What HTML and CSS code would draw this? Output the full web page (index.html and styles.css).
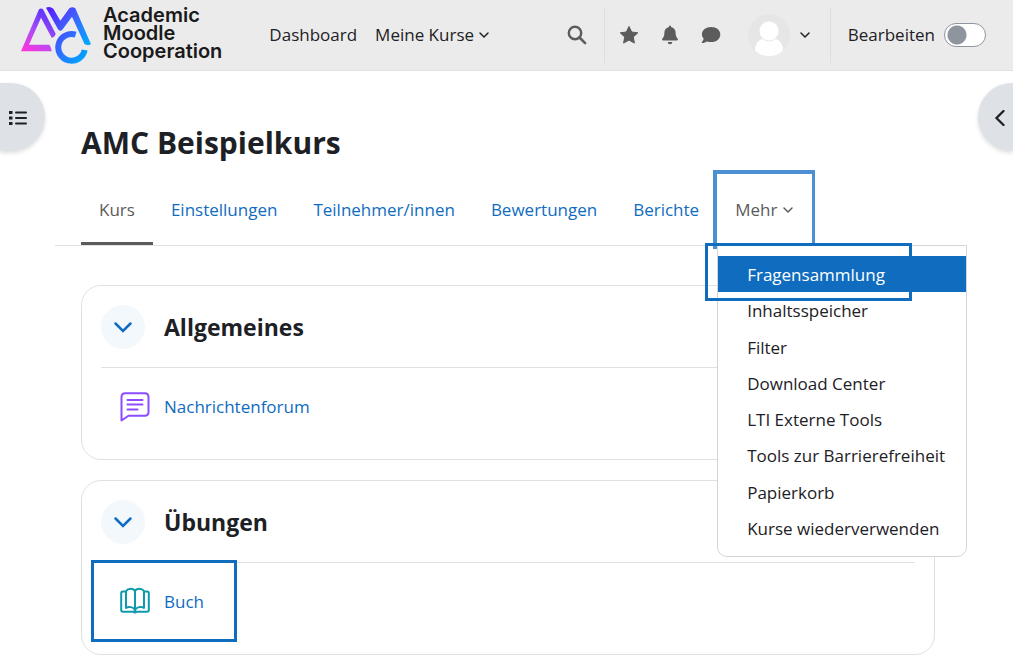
FILE: index.html
```html
<!DOCTYPE html>
<html lang="de">
<head>
<meta charset="utf-8">
<meta name="viewport" content="width=device-width, initial-scale=1">
<title>AMC Beispielkurs</title>
<link rel="stylesheet" href="styles.css">
</head>
<body>
<header class="navbar">
  <a class="brand" href="#">
    <svg class="brand-mark" viewBox="18 15 213 174" aria-hidden="true">
      <defs>
        <linearGradient id="gradA" gradientUnits="userSpaceOnUse" x1="30" y1="150" x2="105" y2="40">
          <stop offset="0" stop-color="#ff35dc"/><stop offset=".45" stop-color="#b14cf5"/><stop offset="1" stop-color="#5b35ff"/>
        </linearGradient>
        <linearGradient id="gradM" gradientUnits="userSpaceOnUse" x1="98" y1="20" x2="222" y2="125">
          <stop offset="0" stop-color="#5a18ff"/><stop offset=".5" stop-color="#3f63ff"/><stop offset="1" stop-color="#00a8ff"/>
        </linearGradient>
        <linearGradient id="gradC" gradientUnits="userSpaceOnUse" x1="125" y1="95" x2="215" y2="170">
          <stop offset="0" stop-color="#4a4dff"/><stop offset="1" stop-color="#00a6ff"/>
        </linearGradient>
      </defs>
      <path d="M72 25Q78 20 84 25L122 98Q120 108 110 110L78 50L42 131H103Q109 139 110 151H18Z" fill="url(#gradA)"/>
      <path d="M93 20Q105 15 115 23L136 59L163 22Q172 16 181 22L228 130Q220 135 209 130L171 47L142 86Q136 92 130 86Z" fill="url(#gradM)"/>
      <path d="M182 101A40 40 0 1 0 209 147" fill="none" stroke="url(#gradC)" stroke-width="18"/>
    </svg>
    <span class="brand-name">Academic<br>Moodle<br>Cooperation</span>
  </a>
  <nav class="main-nav" aria-label="Hauptnavigation">
    <a href="#">Dashboard</a>
    <a href="#">Meine Kurse <svg class="caret" viewBox="0 0 12 12" aria-hidden="true"><path d="M2 4l4 4 4-4"/></svg></a>
  </nav>
  <div class="tools">
    <button class="tool" type="button" aria-label="Suche"><svg viewBox="0 0 20 20" aria-hidden="true"><circle cx="8" cy="8" r="6.2" fill="none" stroke="currentColor" stroke-width="2.4"/><path d="M12.500 12.500l5.600 5.600" stroke="currentColor" stroke-width="2.600" stroke-linecap="round"/></svg></button>
    <div class="tool-set">
      <button class="tool" type="button" aria-label="Favoriten"><svg viewBox="0 0 20 20" aria-hidden="true"><path fill="currentColor" stroke="currentColor" stroke-linejoin="round" d="M10 1.400l2.700 5.600 6.100.800-4.500 4.200 1.100 6.100L10 15.100l-5.400 3 1.100-6.100L1.200 7.800l6.100-.800z"/></svg></button>
      <button class="tool" type="button" aria-label="Mitteilungen"><svg viewBox="0 0 20 20" aria-hidden="true"><path fill="currentColor" d="M9 1.500a1 1 0 0 1 2 0v.6c2.800.5 4.600 2.700 4.600 5.400 0 3.300.8 4.700 2 6 .7.800.2 2-.8 2H3.200c-1 0-1.500-1.200-.8-2 1.200-1.300 2-2.700 2-6 0-2.700 1.800-4.900 4.600-5.400zM7.700 17h4.600a2.300 2.300 0 0 1-4.600 0z"/></svg></button>
      <button class="tool" type="button" aria-label="Nachrichten"><svg viewBox="0 0 20 20" aria-hidden="true"><path fill="currentColor" d="M10.200 2C4.900 2 .9 5.200.9 9.300c0 1.700.7 3.200 1.800 4.500-.3 1.300-1 2.400-1.800 3.200-.4.400-.1.900.4.900 1.800 0 3.400-.6 4.700-1.500 1.300.5 2.700.7 4.200.7 5.200 0 9.100-3.400 9.100-7.700S15.400 2 10.200 2z"/></svg></button>
      <button class="user" type="button" aria-label="Nutzermenü">
        <svg class="avatar" viewBox="0 0 42 42" aria-hidden="true"><circle cx="21" cy="21" r="21" fill="#e6e6e6"/><path fill="#fff" d="M7 36c0-8 5-12 14-12s14 4 14 12c-3 4-8 6-14 6S10 40 7 36z"/><circle cx="21" cy="17" r="10" fill="#fff" stroke="#e8e8e8"/></svg>
        <svg class="caret" viewBox="0 0 12 12" aria-hidden="true"><path d="M2 4l4 4 4-4"/></svg>
      </button>
    </div>
    <label class="edit-mode">Bearbeiten <input class="switch" type="checkbox" role="switch"></label>
  </div>
</header>

<button class="drawer drawer-left" type="button" aria-label="Kursindex öffnen"><svg viewBox="0 0 18 16" aria-hidden="true"><path d="M7 2.500h10M7 8h10M7 13.500h10" stroke="currentColor" stroke-width="2" stroke-linecap="round"/><path d="M0 1h3.500v3H0zM0 6.500h3.500v3H0zM0 12h3.500v3H0z" fill="currentColor"/></svg></button>
<button class="drawer drawer-right" type="button" aria-label="Blockleiste öffnen"><svg viewBox="0 0 18 16" aria-hidden="true"><path d="M12.500 1L5.500 8l7 7" fill="none" stroke="currentColor" stroke-width="2.300" stroke-linecap="round"/></svg></button>

<main class="page">
  <h1>AMC Beispielkurs</h1>
  <nav class="tabs" aria-label="Kursnavigation">
    <a class="tab active" href="#">Kurs</a>
    <a class="tab" href="#">Einstellungen</a>
    <a class="tab" href="#">Teilnehmer/innen</a>
    <a class="tab" href="#">Bewertungen</a>
    <a class="tab" href="#">Berichte</a>
    <div class="more">
      <button class="tab more-button" type="button" aria-expanded="true">Mehr <svg class="caret" viewBox="0 0 12 12" aria-hidden="true"><path d="M2 4l4 4 4-4"/></svg></button>
      <div class="menu">
        <a class="selected" href="#">Fragensammlung</a>
        <a href="#">Inhaltsspeicher</a>
        <a href="#">Filter</a>
        <a href="#">Download Center</a>
        <a href="#">LTI Externe Tools</a>
        <a href="#">Tools zur Barrierefreiheit</a>
        <a href="#">Papierkorb</a>
        <a href="#">Kurse wiederverwenden</a>
      </div>
    </div>
  </nav>

  <div class="sections">
    <section class="card">
      <div class="card-head">
        <button class="toggle" type="button" aria-label="Allgemeines einklappen"><svg viewBox="0 0 20 20" aria-hidden="true"><path d="M2.500 6.500L10 14l7.500-7.500"/></svg></button>
        <h2>Allgemeines</h2>
      </div>
      <div class="activity">
        <svg class="forum" viewBox="0 0 30 30" aria-hidden="true"><path d="M1.500 28.500V5q0-3.700 3.700-3.700h19.600q3.700 0 3.700 3.700v15q0 3.700-3.700 3.700H8.500zM7.500 8h15M7.500 12.500h15M7.500 17.500h10"/></svg>
        <a href="#">Nachrichtenforum</a>
      </div>
    </section>
    <section class="card">
      <div class="card-head">
        <button class="toggle" type="button" aria-label="Übungen einklappen"><svg viewBox="0 0 20 20" aria-hidden="true"><path d="M2.500 6.500L10 14l7.500-7.500"/></svg></button>
        <h2>Übungen</h2>
      </div>
      <div class="activity marked">
        <svg class="book" viewBox="0 0 30 30" aria-hidden="true"><path d="M15 4v20M15 4c-1.500-3-7-3-9 0v17c2-1.500 7.500-1.500 9 2 1.500-3.500 7-3.500 9-2V4c-2-3-7.500-3-9 0M6 4.500H3Q1.200 4.500 1.200 6v17q0 1.800 1.800 1.800h10.500q1.500 1.500 3 0H27q1.800 0 1.800-1.800V6q0-1.500-1.800-1.500h-3"/></svg>
        <a href="#">Buch</a>
      </div>
    </section>
  </div>
</main>
</body>
</html>
```
FILE: styles.css
```css
*, *::before, *::after { box-sizing: border-box; }
body {
  margin: 0;
  background: #fff;
  color: #1d2125;
  font: 17px/24px "Open Sans", "Noto Sans", sans-serif;
}
a { color: #0f6cbf; text-decoration: none; }
button { padding: 0; border: 0; background: none; color: inherit; font: inherit; cursor: pointer; }
svg { display: block; flex: none; }
h1, h2 { margin: 0; font-weight: 700; }

.caret { display: inline-block; width: 12px; height: 12px; }
.caret path { fill: none; stroke: currentColor; stroke-width: 1.5; stroke-linecap: round; }

.navbar {
  display: flex;
  align-items: center;
  height: 71px;
  padding: 0 27px 0 21px;
  background: #ebebeb;
  border-bottom: 1px solid #dee2e6;
}
.brand { display: flex; align-items: center; gap: 11px; color: #1a1a1a; }
.brand-mark { width: 71px; height: 58px; }
.brand-name { margin-bottom: 4px; font: 600 20px/18px Inter, sans-serif; }
.main-nav { display: flex; gap: 18px; margin-left: 47px; white-space: nowrap; }
.main-nav a { color: #1d2125; }

.tools { display: flex; align-items: center; height: 56px; margin-left: auto; }
.tool { display: grid; place-items: center; width: 41px; height: 41px; color: #5c5c5c; }
.tool svg { width: 20px; height: 20px; }
.tool-set {
  display: flex;
  align-items: center;
  align-self: stretch;
  margin-left: 6px;
  padding: 0 19px 0 4px;
  border: solid #dcdee0;
  border-width: 0 1px;
}
.user { display: flex; align-items: center; gap: 9px; margin-left: 16px; }
.avatar { width: 42px; height: 42px; }
.edit-mode { display: flex; align-items: center; gap: 9px; margin-left: 17px; }
.switch {
  appearance: none;
  width: 42px;
  height: 24px;
  margin: 0;
  border: 1px solid #8f959e;
  border-radius: 12px;
  background: radial-gradient(circle at 12px 11px, #8f959e 9px, #fff 10px);
}

.drawer {
  position: fixed;
  top: 83px;
  display: flex;
  align-items: center;
  height: 68px;
  padding-top: 2px;
  background: #dee2e6;
  box-shadow: 0 2px 4px #00000022;
}
.drawer svg { width: 18px; height: 16px; }
.drawer-left { left: 0; width: 45px; padding-left: 9px; border-radius: 0 34px 34px 0; }
.drawer-right { right: 0; width: 35px; padding-left: 13px; border-radius: 34px 0 0 34px; }

.page { padding: 52px 47px 14px 55px; }
h1 { padding-left: 26px; font-size: 30px; line-height: 40px; }
.tabs {
  display: flex;
  margin-top: 11px;
  padding-left: 26px;
  border-bottom: 1px solid #dee2e6;
}
.tab {
  display: block;
  height: 71px;
  padding: 24px 18px 20px;
  border-bottom: 3px solid transparent;
  white-space: nowrap;
}
.tab.active { color: #5b5b5b; border-color: #5b5b5b; }
.more { position: relative; }
.more-button { color: #5b5b5b; }
.more::before {
  content: "";
  position: absolute;
  inset: -4px -3px -4px -4px;
  border: solid #4a90d2;
  border-width: 4px 3px 0 4px;
  pointer-events: none;
}
.menu {
  position: absolute;
  top: 71px;
  left: 0;
  z-index: 1;
  display: grid;
  grid-auto-rows: 1fr;
  min-width: 250px;
  min-height: 312px;
  padding: 10px 0;
  border: 1px solid #d3d6d9;
  border-radius: 0 0 10px 10px;
  background: #fff;
}
.menu a { display: flex; align-items: center; padding: 2px 21px 0 29px; color: #1d2125; white-space: nowrap; }
.menu .selected { background: #0f6cbf; color: #fff; }
.menu::after {
  content: "";
  position: absolute;
  top: -3px;
  left: -13px;
  width: 207px;
  height: 58px;
  border: 3px solid #0f6cbf;
  pointer-events: none;
}

.sections { display: grid; gap: 20px; padding: 39px 31px 0 26px; }
.card { padding: 0 19px 13px; border: 1px solid #dee2e6; border-radius: 20px; }
.card-head {
  display: flex;
  align-items: center;
  gap: 19px;
  height: 82px;
  border-bottom: 1px solid #dee2e6;
}
.toggle { display: grid; place-items: center; width: 44px; height: 44px; border-radius: 50%; background: #f3f8fc; color: #0f6cbf; }
.toggle svg { width: 20px; height: 20px; }
.toggle path { fill: none; stroke: currentColor; stroke-width: 2.5; stroke-linecap: round; }
h2 { font-size: 23px; line-height: 32px; }
.activity { position: relative; display: flex; align-items: center; gap: 14px; height: 78px; padding-left: 19px; }
.forum, .book { width: 30px; height: 30px; fill: none; stroke-width: 2; stroke-linejoin: round; stroke-linecap: round; }
.forum { stroke: #8b4dff; }
.book { stroke: #0d9aad; }
.marked::before {
  content: "";
  position: absolute;
  top: -3px;
  left: -10px;
  width: 146px;
  height: 82px;
  border: 3px solid #0f6cbf;
  pointer-events: none;
}
```
